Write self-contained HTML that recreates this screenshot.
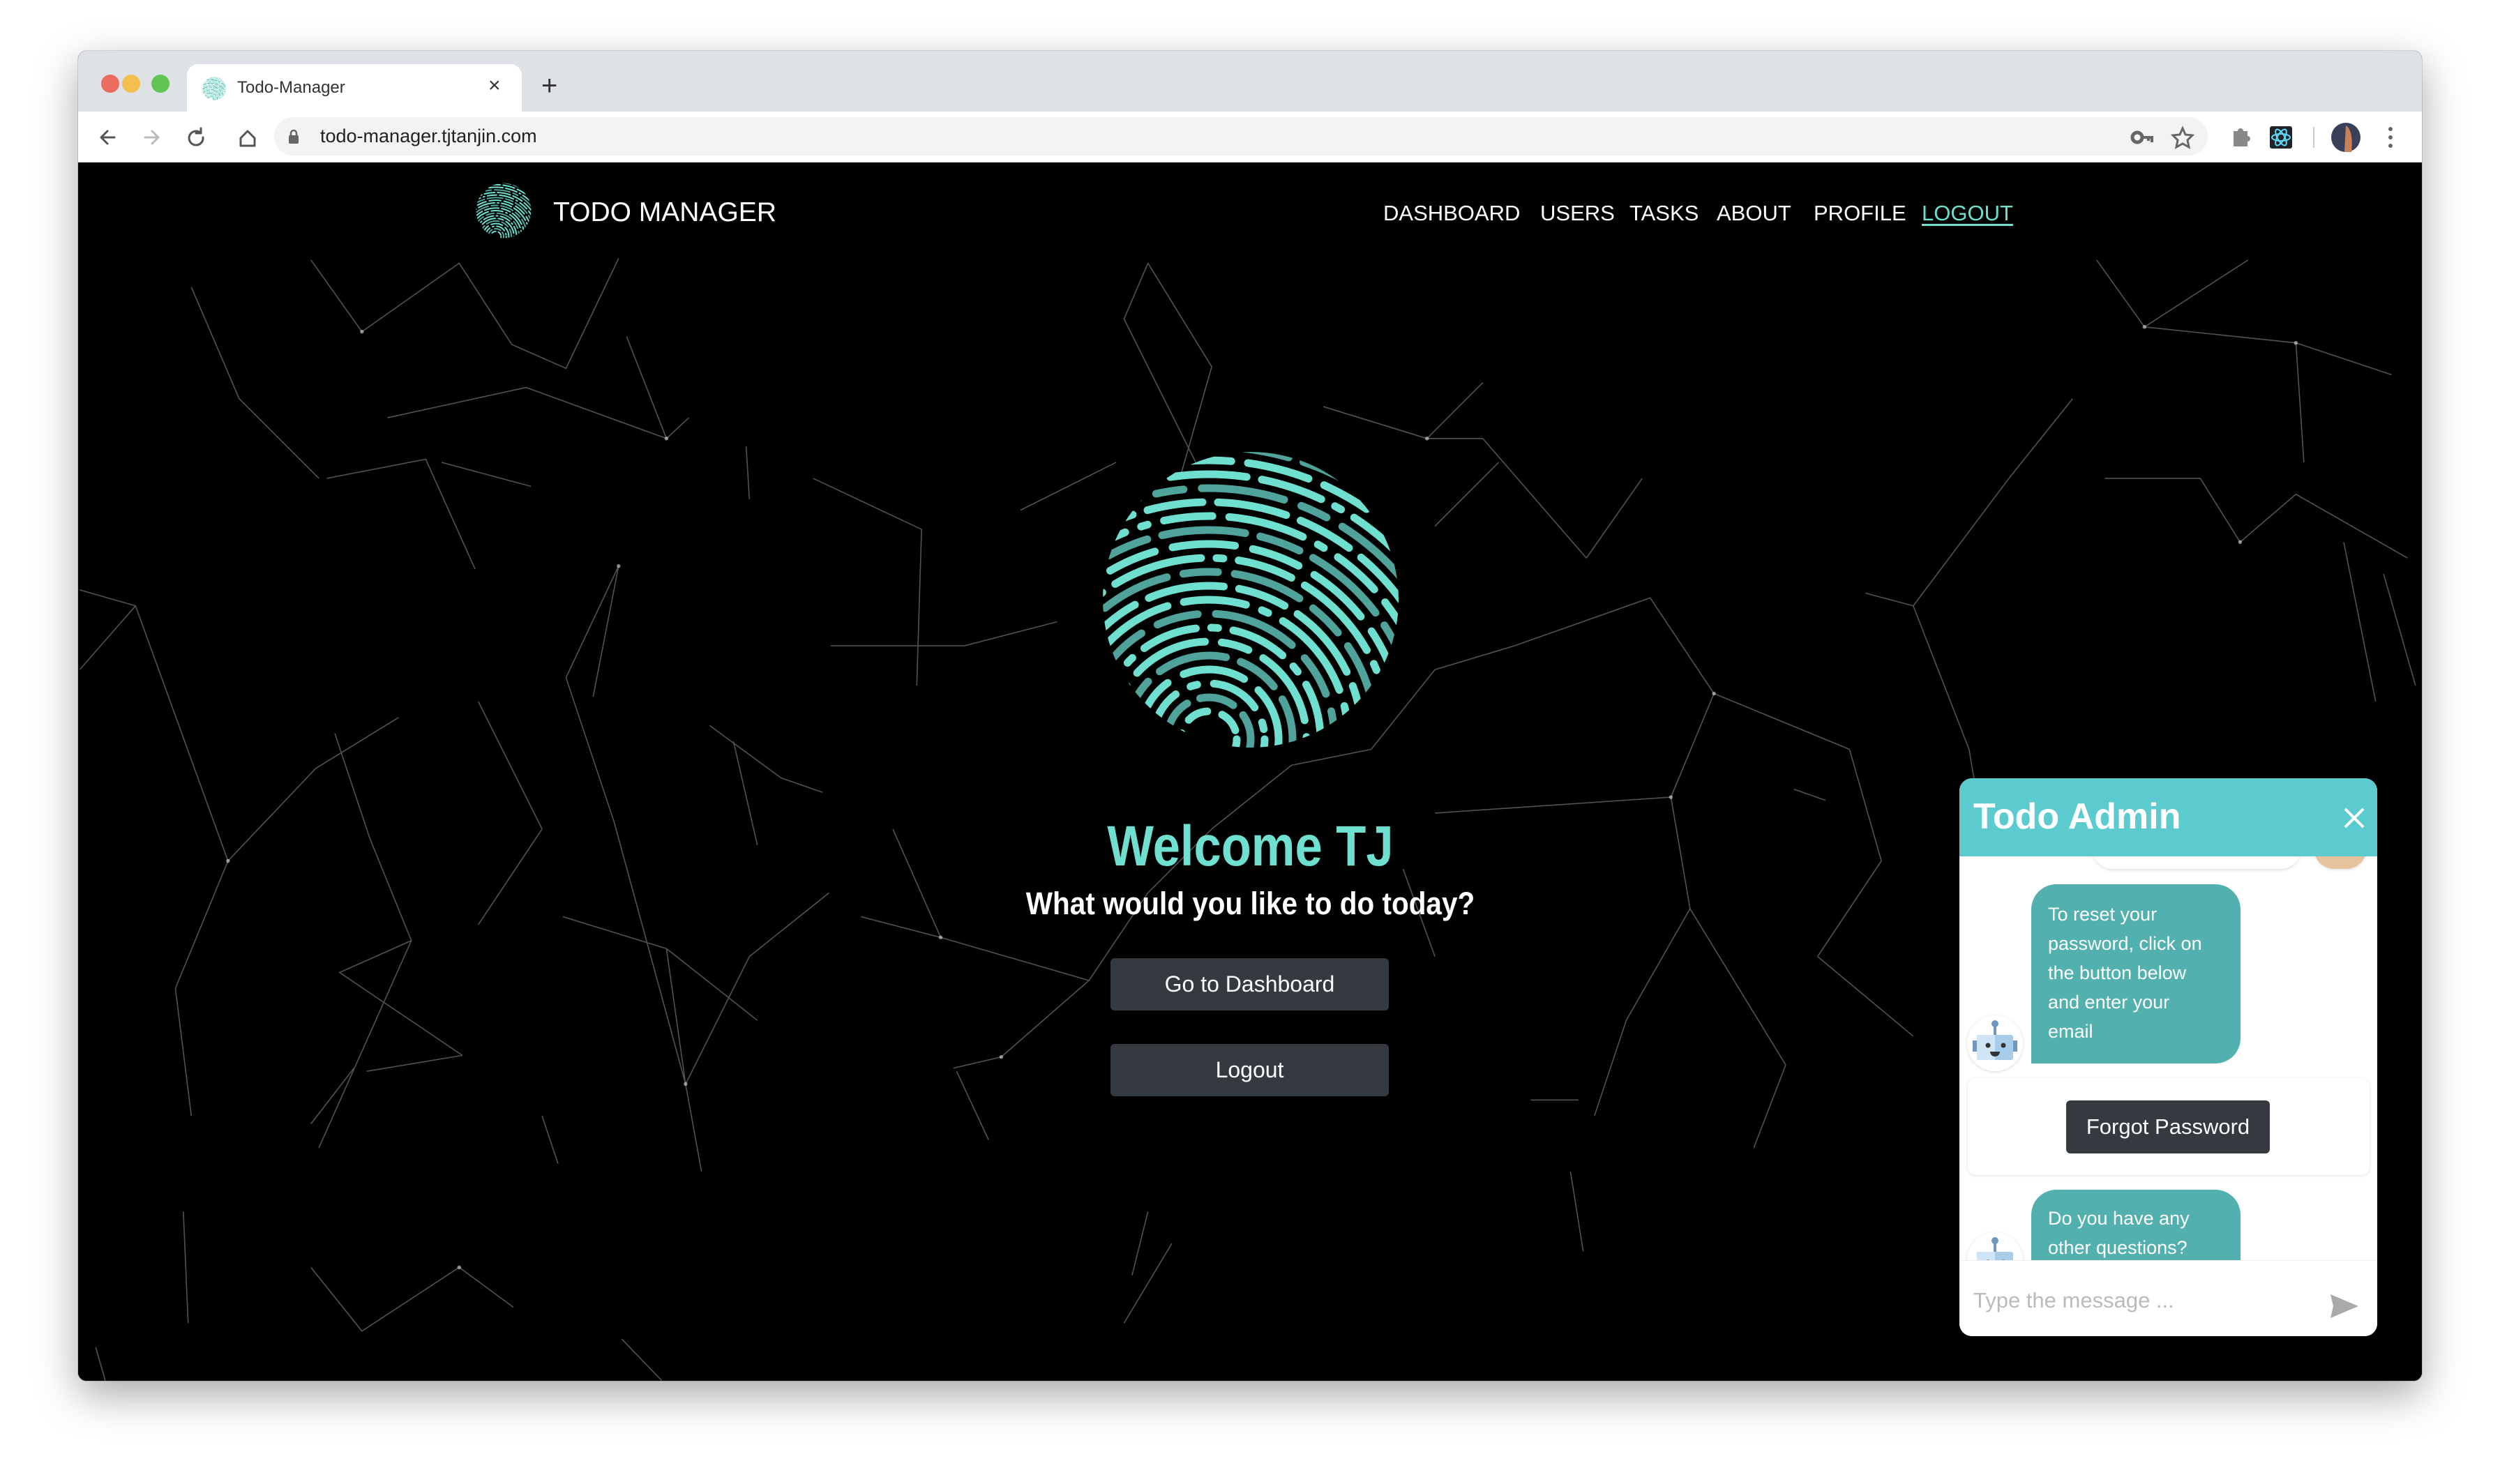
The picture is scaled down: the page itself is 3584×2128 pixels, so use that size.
<!DOCTYPE html>
<html><head><meta charset="utf-8"><style>
*{margin:0;padding:0;box-sizing:border-box}
body{width:3584px;height:2128px;background:#fff;position:relative;overflow:hidden;font-family:"Liberation Sans",Arial,sans-serif}
.win{position:absolute;left:112px;top:73px;width:3360px;height:1907px;border-radius:12px;overflow:hidden;background:#000;box-shadow:0 20px 60px rgba(0,0,0,.35),0 0 0 1px rgba(0,0,0,.12)}
.tabbar{position:absolute;left:0;top:0;width:100%;height:87px;background:#dee1e6}
.dot{position:absolute;top:34px;width:26px;height:26px;border-radius:50%}
.tab{position:absolute;left:156px;top:19px;width:480px;height:69px;background:#fff;border-radius:16px 16px 0 0}
.toolbar{position:absolute;left:0;top:87px;width:100%;height:73px;background:#fff;border-bottom:1px solid #ddd}
.addr{position:absolute;left:281px;top:8px;width:2772px;height:55px;border-radius:28px;background:#f1f3f4}
.page{position:absolute;left:0;top:160px;width:100%;height:1747px;background:#000}
.abs{position:absolute}
.nav a{position:absolute;top:55px;color:#fff;font-size:31px;text-decoration:none;white-space:nowrap}
.btn{position:absolute;left:1480px;width:399px;height:75px;background:#343a40;border-radius:6px;color:#fff;font-size:32px;text-align:center;line-height:75px}
.chat{position:absolute;left:2697px;top:883px;width:599px;height:800px;background:#fff;border-radius:18px;overflow:hidden;box-shadow:0 4px 20px rgba(0,0,0,.3)}
.bub{position:absolute;left:103px;width:300px;background:#52b0ae;border-radius:36px 36px 36px 0;color:#fff;font-size:27px;line-height:42px;padding:22px 40px 16px 24px}
</style></head><body>
<svg width="0" height="0" style="position:absolute">
<clipPath id="cc"><circle cx="0" cy="0" r="212"/></clipPath>
<symbol id="fp" viewBox="-215 -215 430 430">
<g clip-path="url(#cc)"><g fill="none" stroke-width="11" stroke-linecap="round" transform="translate(-60 200)">
<circle r="40" stroke="#6fe0d0" stroke-dasharray="30 22"/>
<circle r="60" stroke="#4fa39a" stroke-dasharray="50 20" stroke-dashoffset="10"/>
<circle r="80" stroke="#6fe0d0" stroke-dasharray="70 24 10 24"/>
<circle r="100" stroke="#6fe0d0" stroke-dasharray="90 26" stroke-dashoffset="30"/>
<circle r="120" stroke="#4fa39a" stroke-dasharray="60 22 100 22"/>
<circle r="140" stroke="#6fe0d0" stroke-dasharray="110 24 40 24" stroke-dashoffset="50"/>
<circle r="160" stroke="#6fe0d0" stroke-dasharray="80 22 10 22" stroke-dashoffset="15"/>
<circle r="180" stroke="#4fa39a" stroke-dasharray="120 26 60 26" stroke-dashoffset="70"/>
<circle r="200" stroke="#6fe0d0" stroke-dasharray="90 24 10 24 130 24"/>
<circle r="220" stroke="#6fe0d0" stroke-dasharray="70 22 110 22" stroke-dashoffset="40"/>
<circle r="240" stroke="#4fa39a" stroke-dasharray="100 24 50 24" stroke-dashoffset="20"/>
<circle r="260" stroke="#6fe0d0" stroke-dasharray="130 22 10 22 80 22" stroke-dashoffset="60"/>
<circle r="280" stroke="#6fe0d0" stroke-dasharray="90 26 70 26" stroke-dashoffset="5"/>
<circle r="300" stroke="#4fa39a" stroke-dasharray="60 22 120 22" stroke-dashoffset="80"/>
<circle r="320" stroke="#6fe0d0" stroke-dasharray="110 24 10 24 70 24" stroke-dashoffset="35"/>
<circle r="340" stroke="#6fe0d0" stroke-dasharray="80 22 100 22" stroke-dashoffset="55"/>
<circle r="360" stroke="#4fa39a" stroke-dasharray="120 26 40 26" stroke-dashoffset="10"/>
<circle r="380" stroke="#6fe0d0" stroke-dasharray="90 22 10 22 110 22" stroke-dashoffset="65"/>
<circle r="400" stroke="#6fe0d0" stroke-dasharray="70 24 90 24" stroke-dashoffset="25"/>
<circle r="420" stroke="#4fa39a" stroke-dasharray="100 22 60 22" stroke-dashoffset="45"/>
<circle r="440" stroke="#6fe0d0" stroke-dasharray="130 26 10 26" stroke-dashoffset="75"/>
<circle r="460" stroke="#6fe0d0" stroke-dasharray="80 24 100 24" stroke-dashoffset="15"/>
</g></g>
</symbol>
</svg>
<div class="win">
 <div class="tabbar">
  <div class="dot" style="left:33px;background:#ed6a5e"></div>
  <div class="dot" style="left:63px;background:#f5bf4f"></div>
  <div class="dot" style="left:105px;background:#61c554"></div>
  <div class="tab">
   <svg class="abs" style="left:22px;top:18px" width="34" height="34"><use href="#fp"/></svg>
   <div class="abs" style="left:72px;top:20px;font-size:24px;color:#333">Todo-Manager</div>
   <div class="abs" style="left:432px;top:14px;font-size:30px;color:#333">×</div>
  </div>
  <div class="abs" style="left:664px;top:30px;font-size:40px;color:#333;line-height:40px">+</div>
 </div>
 <div class="toolbar">
  <svg class="abs" style="left:20px;top:20px" width="360" height="34" fill="none" stroke-width="3" stroke-linecap="round" stroke-linejoin="round">
   <path d="M32 17H14M22 8l-9 9 9 9" stroke="#555"/>
   <path d="M76 17h18M86 8l9 9-9 9" stroke="#bbb"/>
   <path d="M155 10a10 10 0 1 0 4 7M156 4v7h-7" stroke="#555"/>
   <path d="M213 18l10-10 10 10v11h-20z" stroke="#555"/>
  </svg>
  <div class="addr">
   <svg class="abs" style="left:20px;top:17px" width="16" height="22"><rect x="1" y="9" width="14" height="12" rx="2" fill="#666"/><path d="M4 10V6a4 4 0 0 1 8 0v4" stroke="#666" stroke-width="2.5" fill="none"/></svg>
   <div class="abs" style="left:66px;top:12px;font-size:27px;color:#222">todo-manager.tjtanjin.com</div>
  </div>
  <svg class="abs" style="left:2940px;top:16px" width="420" height="44">
   <circle cx="12" cy="21" r="7" fill="none" stroke="#666" stroke-width="5"/><path d="M19 21h14v7M28 21v5" stroke="#666" stroke-width="4" fill="none"/>
   <path d="M77 8l4 9 10 1-7 7 2 10-9-5-9 5 2-10-7-7 10-1z" fill="none" stroke="#666" stroke-width="3"/>
   <path d="M150 12h6a4 4 0 0 1 8 0h6v7a4 4 0 0 1 0 8v7h-20z" fill="#888"/>
   <rect x="202" y="5" width="32" height="32" rx="3" fill="#20232a"/>
   <g fill="none" stroke="#61dafb" stroke-width="2"><ellipse cx="218" cy="21" rx="13" ry="5"/><ellipse cx="218" cy="21" rx="13" ry="5" transform="rotate(60 218 21)"/><ellipse cx="218" cy="21" rx="13" ry="5" transform="rotate(120 218 21)"/></g>
   <rect x="264" y="6" width="2" height="30" fill="#ccc"/>
   <circle cx="311" cy="21" r="21" fill="#3a3f5a"/><path d="M311 4c8 4 10 20 8 38h-10z" fill="#c7825a"/>
   <circle cx="375" cy="9" r="3" fill="#666"/><circle cx="375" cy="21" r="3" fill="#666"/><circle cx="375" cy="33" r="3" fill="#666"/>
  </svg>
 </div>
 <div class="page">
  <svg class="abs" style="left:0;top:0" width="3360" height="1747" viewBox="49 102 1470 764" fill="none" stroke="rgba(255,255,255,0.32)" stroke-width="0.7">
   <path d="M195 163L227 208L288 165L321 216L355 231L388 162M243 262L330 243L418 275L393 211M418 275L432 262M205 300L267 288L298 357M277 290L333 305M50 370L85 380L143 540L198 482L250 450M210 460L232 526L258 590L213 610L290 662M355 425L388 355L372 437M355 425L385 515L430 680L418 595L353 575M418 595L475 640M430 680L440 735M195 705L222 670M230 672L290 662M510 300L578 332L575 430M521 405L605 405L663 390M445 455L490 488L516 497M540 575L590 588L683 615L628 663L598 670M600 672L620 715M705 200L720 165M705 200L750 290M640 320L700 290M830 255L895 275L930 240M895 275L930 275L995 350M900 330L940 290M950 405L1035 375L1075 435L1160 470M1048 500L1075 435M1048 500L1060 570L1120 668M900 510L1048 500M880 545L900 600M1170 372L1200 380L1235 470M1345 205L1410 163M1345 205L1315 163M1345 205L1440 215L1445 290M1440 215L1500 235M1380 300L1405 340L1440 310L1510 350M1320 300L1380 300M1470 340L1490 440M1495 360L1515 430M960 690L990 690M985 735L993 785M195 795L227 835L288 795L322 820M390 840L415 866M710 800L720 760M705 830L735 780M1320 790L1345 830L1410 790M60 845L66 866M115 760L118 830M460 465L475 530M468 280L470 313M340 700L350 730M1125 495L1145 502M85 380L50 420M143 540L110 620L120 700M258 590L200 720M590 588L560 520M683 615L720 560L760 520M760 520L810 480M810 480L860 470M1060 570L1020 640L1000 700M1120 668L1100 720M1235 470L1250 560M1200 380L1260 300M1260 300L1300 250M520 560L470 600M470 600L430 680M720 165L760 230L740 300M995 350L1030 300M860 470L900 420L950 405M300 440L340 520M340 520L300 580M150 250L200 300M120 180L150 250M1160 470L1180 540M1180 540L1140 600M1140 600L1200 650"/>
   <g fill="rgba(255,255,255,0.5)" stroke="none"><circle cx="227" cy="208" r="1.2"/><circle cx="418" cy="275" r="1.2"/><circle cx="143" cy="540" r="1.2"/><circle cx="388" cy="355" r="1.2"/><circle cx="430" cy="680" r="1.2"/><circle cx="590" cy="588" r="1.2"/><circle cx="895" cy="275" r="1.2"/><circle cx="1075" cy="435" r="1.2"/><circle cx="1345" cy="205" r="1.2"/><circle cx="1440" cy="215" r="1.2"/><circle cx="1048" cy="500" r="1.2"/><circle cx="628" cy="663" r="1.2"/><circle cx="1405" cy="340" r="1.2"/><circle cx="288" cy="795" r="1.2"/></g>
  </svg>
  <div class="nav">
   <svg class="abs" style="left:570px;top:29px" width="80" height="80"><use href="#fp"/></svg>
   <div class="abs" style="left:681px;top:50px;color:#fff;font-size:39px;white-space:nowrap">TODO MANAGER</div>
   <a style="left:1871px">DASHBOARD</a>
   <a style="left:2096px">USERS</a>
   <a style="left:2224px">TASKS</a>
   <a style="left:2349px">ABOUT</a>
   <a style="left:2488px">PROFILE</a>
   <a style="left:2643px;color:#6fe0d0;text-decoration:underline;text-underline-offset:5px">LOGOUT</a>
  </div>
  <svg class="abs" style="left:1466px;top:412px" width="430" height="430"><use href="#fp"/></svg>
  <div class="abs" style="left:0;width:3360px;top:934px;text-align:center"><span style="display:inline-block;font-size:82px;font-weight:bold;color:#6fe0d0;transform:scaleX(0.86);white-space:nowrap">Welcome TJ</span></div>
  <div class="abs" style="left:0;width:3360px;top:1037px;text-align:center"><span style="display:inline-block;font-size:45px;font-weight:bold;color:#fff;transform:scaleX(0.9);white-space:nowrap">What would you like to do today?</span></div>
  <div class="btn" style="top:1141px">Go to Dashboard</div>
  <div class="btn" style="top:1264px">Logout</div>
  <div class="chat">
   <div class="abs" style="left:190px;top:90px;width:300px;height:40px;border-radius:0 0 30px 30px;box-shadow:0 2px 4px rgba(0,0,0,.12);background:#fff"></div>
   <div class="abs" style="left:508px;top:100px;width:76px;height:30px;border-radius:0 0 38px 38px;background:#e6c39c;box-shadow:0 2px 3px rgba(0,0,0,.1)"></div>
   <div class="abs" style="left:0;top:0;width:599px;height:112px;background:#5ccbcf"></div>
   <div class="abs" style="left:20px;top:25px;font-size:52px;font-weight:bold;color:#fff">Todo Admin</div>
   <svg class="abs" style="left:551px;top:42px" width="30" height="30" stroke="#fff" stroke-width="4"><path d="M2 2l26 26M28 2L2 28"/></svg>
   <div class="bub" style="top:152px;height:257px">To reset your password, click on the button below and enter your email</div>
   <div class="abs" style="left:11px;top:340px;width:80px;height:80px;border-radius:50%;background:#fff;box-shadow:0 1px 4px rgba(0,0,0,.15)">
    <svg width="80" height="80"><rect x="14" y="28" width="52" height="36" rx="3" fill="#a8cdea"/><rect x="14" y="28" width="26" height="36" fill="#cfe4f5"/><rect x="38" y="14" width="4" height="14" fill="#6e98c0"/><circle cx="40" cy="12" r="5" fill="#6e98c0"/><rect x="8" y="36" width="6" height="16" fill="#6e98c0"/><rect x="66" y="36" width="6" height="16" fill="#6e98c0"/><circle cx="30" cy="43" r="3.5" fill="#333"/><circle cx="52" cy="43" r="3.5" fill="#333"/><path d="M33 52h14a7 7 0 0 1-14 0z" fill="#333"/></svg>
   </div>
   <div class="abs" style="left:12px;top:430px;width:576px;height:139px;border-radius:12px;box-shadow:0 1px 5px rgba(0,0,0,.12);background:#fff"></div>
   <div class="abs" style="left:153px;top:462px;width:292px;height:76px;background:#343a40;border-radius:6px;color:#fff;font-size:31px;text-align:center;line-height:76px">Forgot Password</div>
   <div class="bub" style="top:590px;height:140px;padding-top:20px">Do you have any other questions?</div>
   <div class="abs" style="left:11px;top:651px;width:80px;height:80px;border-radius:50%;background:#fff;box-shadow:0 1px 4px rgba(0,0,0,.15);overflow:hidden">
    <svg width="80" height="80"><rect x="14" y="28" width="52" height="36" rx="3" fill="#a8cdea"/><rect x="14" y="28" width="26" height="36" fill="#cfe4f5"/><rect x="38" y="14" width="4" height="14" fill="#6e98c0"/><circle cx="40" cy="12" r="5" fill="#6e98c0"/><circle cx="30" cy="43" r="3.5" fill="#333"/><circle cx="52" cy="43" r="3.5" fill="#333"/></svg>
   </div>
   <div class="abs" style="left:0;top:691px;width:599px;height:109px;background:#fff;border-top:1px solid #eee"></div>
   <div class="abs" style="left:20px;top:731px;font-size:31px;color:#bbb">Type the message ...</div>
   <svg class="abs" style="left:530px;top:738px" width="44" height="38"><path d="M2 2l40 17L2 36l4-17z" fill="#aaa"/></svg>
  </div>
 </div>
</div>
</body></html>
